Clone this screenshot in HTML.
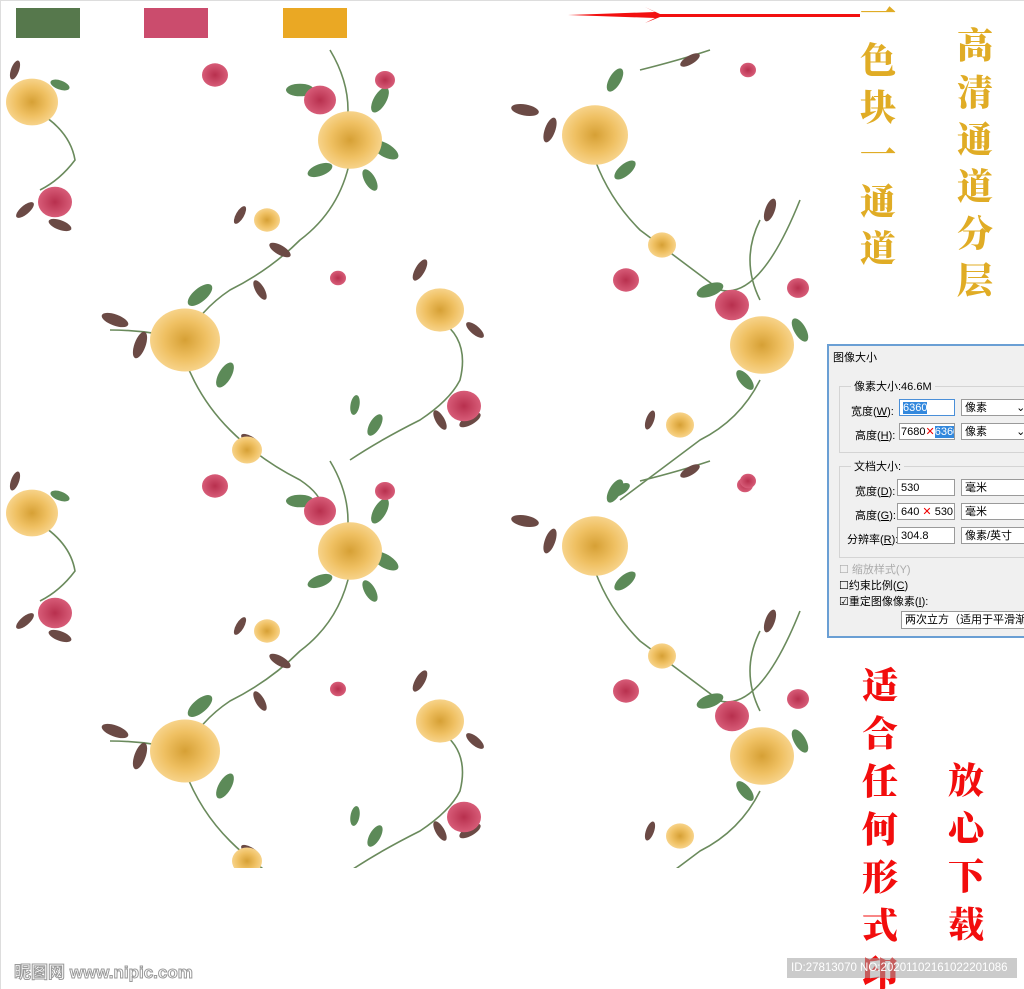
<!DOCTYPE html>
<html><head><meta charset="utf-8"><style>
html,body{margin:0;padding:0;background:#fff;width:1024px;height:989px;overflow:hidden;position:relative;font-family:"Liberation Sans","Noto Sans CJK SC",sans-serif}
.abs{position:absolute}
.col{position:absolute;font-family:"Noto Serif CJK SC","WenQuanYi Zen Hei",serif;font-weight:900;font-size:36px;line-height:47px;width:44px;text-align:center}
.gold{color:#e0ac25}
.red{color:#f20d0d}
.dlg{position:absolute;left:827px;top:344px;width:200px;height:290px;background:#f0f0f0;border:2px solid #6a9fd4;font-size:11px;color:#000}
.dlg .t{position:absolute;white-space:nowrap}
.box{position:absolute;background:#fff;border:1px solid #9a9a9a;height:17px;line-height:17px;padding-left:3px;box-sizing:border-box;white-space:nowrap;overflow:hidden}
.grp{position:absolute;border:1px solid #d4d4d4}
</style></head><body>
<div class="abs" style="left:0;top:0;width:1024px;height:1px;background:#ddd"></div>
<div class="abs" style="left:0;top:0;width:1px;height:989px;background:#ddd"></div>
<div class="abs" style="left:16px;top:8px;width:64px;height:30px;background:#56784c"></div>
<div class="abs" style="left:144px;top:8px;width:64px;height:30px;background:#cb4c6d"></div>
<div class="abs" style="left:283px;top:8px;width:64px;height:30px;background:#eaa824"></div>
<svg class="abs" style="left:560px;top:5px" width="310" height="22"><path d="M8 10 L95 7 L85 2 L100 9 L300 9 L300 12 L100 12 L85 18 L95 13 Z" fill="#f21010"/></svg>

<svg class="abs" style="left:0;top:0" width="822" height="868">
<defs>
<radialGradient id="yr"><stop offset="0" stop-color="#d6a035"/><stop offset=".6" stop-color="#efc062"/><stop offset="1" stop-color="#f7d38a"/></radialGradient>
<radialGradient id="pr"><stop offset="0" stop-color="#b8304e"/><stop offset="1" stop-color="#d75c78"/></radialGradient>
<g id="Y"><ellipse rx="1" ry=".9" fill="url(#yr)"/></g>
<g id="L"><ellipse rx="1" ry=".45" fill="#5c8a58"/></g>
<g id="D"><ellipse rx="1" ry=".4" fill="#6b4a45"/></g>
<g id="P"><ellipse rx="1" ry=".9" fill="url(#pr)"/></g>
<g id="tileA">
 <path d="M330 50 Q360 100 340 150 M350 160 Q340 210 300 240 Q270 270 230 290 Q200 310 185 340 M185 360 Q200 400 230 430 Q260 460 300 480 Q330 500 320 520 M440 320 Q470 340 460 380 Q450 400 420 420 Q380 440 350 460 M35 110 Q70 130 75 160 Q60 180 40 190 M110 330 Q150 330 185 340" stroke="#6a8a5c" stroke-width="1.6" fill="none"/>
 <use href="#L" transform="translate(300,90) scale(14)"/><use href="#L" transform="translate(380,100) rotate(-60) scale(14)"/><use href="#L" transform="translate(385,150) rotate(30) scale(15)"/><use href="#L" transform="translate(320,170) rotate(-20) scale(13)"/><use href="#L" transform="translate(370,180) rotate(60) scale(12)"/>
 <use href="#L" transform="translate(200,295) rotate(-40) scale(15)"/><use href="#L" transform="translate(225,375) rotate(-60) scale(14)"/><use href="#D" transform="translate(115,320) rotate(20) scale(14)"/><use href="#D" transform="translate(140,345) rotate(-70) scale(14)"/>
 <use href="#D" transform="translate(280,250) rotate(30) scale(12)"/><use href="#D" transform="translate(260,290) rotate(60) scale(11)"/><use href="#D" transform="translate(420,270) rotate(-60) scale(12)"/><use href="#D" transform="translate(475,330) rotate(40) scale(11)"/>
 <use href="#D" transform="translate(470,420) rotate(-30) scale(12)"/><use href="#D" transform="translate(440,420) rotate(60) scale(11)"/><use href="#L" transform="translate(375,425) rotate(-60) scale(12)"/><use href="#L" transform="translate(355,405) rotate(-80) scale(10)"/>
 <use href="#D" transform="translate(60,225) rotate(20) scale(12)"/><use href="#D" transform="translate(25,210) rotate(-40) scale(11)"/><use href="#L" transform="translate(60,85) rotate(20) scale(10)"/><use href="#D" transform="translate(15,70) rotate(-70) scale(10)"/>
 <use href="#D" transform="translate(240,215) rotate(-60) scale(10)"/><use href="#D" transform="translate(250,440) rotate(30) scale(10)"/>
 <use href="#Y" transform="translate(350,140) scale(32)"/><use href="#Y" transform="translate(185,340) scale(35)"/><use href="#Y" transform="translate(440,310) scale(24)"/><use href="#Y" transform="translate(32,102) scale(26)"/>
 <use href="#Y" transform="translate(267,220) scale(13)"/><use href="#Y" transform="translate(247,450) scale(15)"/>
 <use href="#P" transform="translate(215,75) scale(13)"/><use href="#P" transform="translate(320,100) scale(16)"/><use href="#P" transform="translate(55,202) scale(17)"/><use href="#P" transform="translate(464,406) scale(17)"/><use href="#P" transform="translate(385,80) scale(10)"/><use href="#P" transform="translate(338,278) scale(8)"/>
</g>
<g id="tileB">
 <path d="M595 160 Q610 200 640 230 Q680 260 720 290 Q760 300 800 200 M760 380 Q740 420 700 440 Q660 470 620 500 M640 70 Q680 60 710 50 M760 300 Q740 260 760 220" stroke="#6a8a5c" stroke-width="1.6" fill="none"/>
 <use href="#D" transform="translate(525,110) rotate(10) scale(14)"/><use href="#D" transform="translate(550,130) rotate(-70) scale(13)"/><use href="#L" transform="translate(615,80) rotate(-60) scale(13)"/><use href="#L" transform="translate(625,170) rotate(-40) scale(13)"/>
 <use href="#L" transform="translate(710,290) rotate(-20) scale(14)"/><use href="#L" transform="translate(800,330) rotate(60) scale(13)"/><use href="#L" transform="translate(745,380) rotate(50) scale(12)"/><use href="#D" transform="translate(770,210) rotate(-70) scale(12)"/><use href="#D" transform="translate(690,60) rotate(-30) scale(11)"/>
 <use href="#D" transform="translate(650,420) rotate(-70) scale(10)"/><use href="#L" transform="translate(620,490) rotate(-30) scale(11)"/>
 <use href="#Y" transform="translate(595,135) scale(33)"/><use href="#Y" transform="translate(762,345) scale(32)"/><use href="#Y" transform="translate(680,425) scale(14)"/><use href="#Y" transform="translate(662,245) scale(14)"/>
 <use href="#P" transform="translate(626,280) scale(13)"/><use href="#P" transform="translate(732,305) scale(17)"/><use href="#P" transform="translate(798,288) scale(11)"/><use href="#P" transform="translate(748,70) scale(8)"/><use href="#P" transform="translate(745,485) scale(8)"/>
</g>
</defs>
<use href="#tileA"/><use href="#tileA" transform="translate(0,411)"/>
<use href="#tileB"/><use href="#tileB" transform="translate(0,411)"/>
</svg>

<div class="col gold" style="left:856px;top:-12px">一<br>色<br>块<br>一<br>通<br>道</div>
<div class="col gold" style="left:953px;top:20px">高<br>清<br>通<br>道<br>分<br>层</div>
<div class="col red" style="left:858px;top:660px;line-height:48px">适<br>合<br>任<br>何<br>形<br>式<br>印</div>
<div class="col red" style="left:944px;top:755px;line-height:48px">放<br>心<br>下<br>载</div>

<div class="dlg">
 <div class="t" style="left:4px;top:3px">图像大小</div>
 <div class="abs" style="left:0;top:20px;width:200px;height:270px;background:#f0f0f0"></div>
 <div class="grp" style="left:10px;top:40px;width:190px;height:65px"></div>
 <div class="t" style="left:22px;top:32px;background:#f0f0f0;padding:0 3px">像素大小:46.6M</div>
 <div class="t" style="left:22px;top:57px">宽度(<u>W</u>):</div>
 <div class="box" style="left:70px;top:53px;width:56px;border-color:#4a8fd8"><span style="background:#3388dd;color:#fff">6360</span></div>
 <div class="box" style="left:132px;top:53px;width:70px">像素 <span style="margin-left:26px">⌄</span></div>
 <div class="t" style="left:26px;top:81px">高度(<u>H</u>):</div>
 <div class="box" style="left:70px;top:77px;width:56px;padding-left:1px">7680<span style="color:#e00">✕</span><span style="background:#3388dd;color:#fff">6360</span></div>
 <div class="box" style="left:132px;top:77px;width:70px">像素 <span style="margin-left:26px">⌄</span></div>
 <div class="grp" style="left:10px;top:120px;width:190px;height:90px"></div>
 <div class="t" style="left:22px;top:112px;background:#f0f0f0;padding:0 3px">文档大小:</div>
 <div class="t" style="left:26px;top:137px">宽度(<u>D</u>):</div>
 <div class="box" style="left:68px;top:133px;width:58px">530</div>
 <div class="box" style="left:132px;top:133px;width:70px">毫米</div>
 <div class="t" style="left:26px;top:161px">高度(<u>G</u>):</div>
 <div class="box" style="left:68px;top:157px;width:58px">640 <span style="color:#e00">✕</span> 530</div>
 <div class="box" style="left:132px;top:157px;width:70px">毫米</div>
 <div class="t" style="left:18px;top:185px">分辨率(<u>R</u>):</div>
 <div class="box" style="left:68px;top:181px;width:58px">304.8</div>
 <div class="box" style="left:132px;top:181px;width:70px">像素/英寸</div>
 <div class="t" style="left:10px;top:215px;color:#aaa">☐ 缩放样式(Y)</div>
 <div class="t" style="left:10px;top:231px">☐约束比例(<u>C</u>)</div>
 <div class="t" style="left:10px;top:247px">☑重定图像像素(<u>I</u>):</div>
 <div class="box" style="left:72px;top:265px;width:130px;height:18px">两次立方（适用于平滑渐变</div>
</div>

<div class="abs" style="left:14px;top:958px;font-size:17px;font-weight:bold;color:#fff;-webkit-text-stroke:1px #999">昵图网 www.nipic.com</div>
<div class="abs" style="left:787px;top:958px;width:230px;height:20px;background:rgba(160,160,160,.55);color:#fff;font-size:11.5px;line-height:20px;padding-left:4px;box-sizing:border-box">ID:27813070 NO:20201102161022201086</div>
</body></html>
